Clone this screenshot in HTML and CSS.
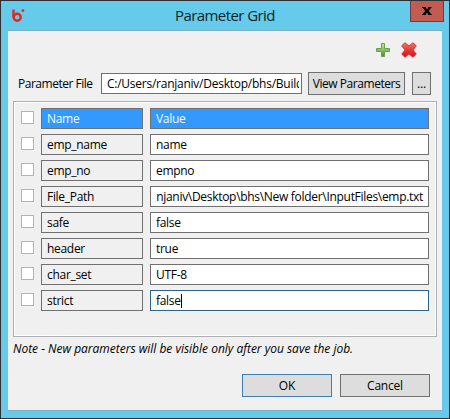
FILE: index.html
```
<!DOCTYPE html>
<html lang="en">
<head>
<meta charset="utf-8">
<title>Parameter Grid</title>
<link rel="stylesheet" href="styles.css">
</head>
<body>
<div class="window">
  <header class="titlebar">
    <svg class="logo" width="14" height="14" viewBox="0 0 14 14"><path d="M1.500 0.500V8.200" fill="none" stroke="#e5261f" stroke-width="2.400"/><circle cx="5.200" cy="8.300" r="3.500" fill="none" stroke="#e5261f" stroke-width="2.400"/><circle cx="10.900" cy="1.600" r="1.350" fill="#e5261f"/></svg>
    <h1 class="title">Parameter Grid</h1>
    <button class="close" aria-label="Close"><svg width="10" height="8" viewBox="0 0 10 8"><path d="M0 0h4v1L5 2.300 6 1V0h3.500v1H9L6.700 4 9.200 7h.5v1H6V7L5 5.700 4 7v1H0V7h.8L3.300 4 1 1H0z" fill="#000"/></svg></button>
  </header>
  <main class="client">
    <div class="tools">
      <svg width="16" height="16" viewBox="0 0 16 16"><defs><linearGradient id="g" x1="0" y1="0" x2="0" y2="1"><stop offset="0" stop-color="#cfe493"/><stop offset=".5" stop-color="#86c05c"/><stop offset="1" stop-color="#4a8545"/></linearGradient></defs><path d="M6.500 1.500h3v5h5v3h-5v5h-3v-5h-5v-3h5z" fill="url(#g)" stroke="#68a24d" stroke-width="1" stroke-linejoin="round"/></svg>
      <svg width="16" height="16" viewBox="0 0 16 16"><defs><linearGradient id="r" x1="0" y1="0" x2="0" y2="1"><stop offset="0" stop-color="#f47862"/><stop offset=".5" stop-color="#e83a32"/><stop offset="1" stop-color="#dc0b1c"/></linearGradient></defs><path d="M4 .7 8 4 12 .7 15.300 3.800 12 8l3.300 4.100L12 15.300 8 12 4 15.300.7 12.100 4 8 .7 3.800z" fill="url(#r)" stroke="#d82c28" stroke-width=".9" stroke-linejoin="round"/></svg>
    </div>
    <div class="file-row">
      <label class="file-label">Parameter File</label>
      <div class="field file-field"><div class="path">C:/Users/ranjaniv/Desktop/bhs/Build</div></div>
      <button class="btn view">View Parameters</button>
      <button class="btn browse">...</button>
    </div>
    <section class="group">
      <div class="row head"><i class="check"></i><div class="field name">Name</div><div class="field value">Value</div></div>
      <div class="row"><i class="check"></i><div class="field name">emp_name</div><div class="field value">name</div></div>
      <div class="row"><i class="check"></i><div class="field name">emp_no</div><div class="field value">empno</div></div>
      <div class="row"><i class="check"></i><div class="field name">File_Path</div><div class="field value scrolled"><span>njaniv\Desktop\bhs\New folder\InputFiles\emp.txt</span></div></div>
      <div class="row"><i class="check"></i><div class="field name">safe</div><div class="field value">false</div></div>
      <div class="row"><i class="check"></i><div class="field name">header</div><div class="field value">true</div></div>
      <div class="row"><i class="check"></i><div class="field name">char_set</div><div class="field value">UTF-8</div></div>
      <div class="row"><i class="check"></i><div class="field name">strict</div><div class="field value focused">false<i class="caret"></i></div></div>
    </section>
    <p class="note">Note - New parameters will be visible only after you save the job.</p>
    <footer class="actions">
      <button class="btn primary">OK</button>
      <button class="btn">Cancel</button>
    </footer>
  </main>
</div>
</body>
</html>
```

FILE: styles.css
```
* { box-sizing: border-box; }
body {
  margin: 0;
  font: 12px/16px "Open Sans", "Noto Sans", sans-serif;
  letter-spacing: -0.3px;
  color: #000;
}
.window {
  width: 450px;
  height: 419px;
  padding: 0 7px 7px;
  border: 1px solid #2d2f33;
  background: #66caea;
  overflow: hidden;
}
.titlebar {
  display: flex;
  height: 29px;
  margin-right: -2px;
}
.logo { margin: 8px 0 0 4px; flex: none; }
.title {
  width: 100px;
  margin: 4px 0 0 149px;
  font-size: 15px;
  line-height: 21px;
  font-weight: 400;
  letter-spacing: -0.58px;
  white-space: nowrap;
  color: #10242b;
}
.close {
  display: flex;
  align-items: center;
  justify-content: center;
  width: 34px;
  height: 21px;
  margin-left: auto;
  padding: 0;
  border: 1px solid #703b3b;
  border-top: 0;
  background: #c45b53;
}
.client {
  height: 381px;
  padding: 0 5px;
  border-top: 1px solid #83aec0;
  border-bottom: 1px solid #83aec0;
  background: #f0f0f0;
}
.tools {
  display: flex;
  justify-content: flex-end;
  gap: 10px;
  height: 41px;
  padding: 11px 20px 0 0;
}
.file-row {
  display: flex;
  align-items: center;
  height: 23px;
  padding-left: 5px;
}
.file-label { width: 83px; letter-spacing: -0.48px; white-space: nowrap; }
.field {
  height: 21px;
  padding: 2px 5px;
  border: 1px solid #707070;
  white-space: nowrap;
  overflow: hidden;
  background: #fff;
}
.file-field { width: 201px; margin-right: 6px; padding-right: 2px; letter-spacing: -0.25px; }
.path { overflow: hidden; }
.btn {
  width: 90px;
  height: 23px;
  padding: 0;
  border: 1px solid #707070;
  background: #ddd;
  font: inherit;
  letter-spacing: -0.2px;
  color: #000;
  white-space: nowrap;
}
.btn.view { width: 97px; margin-right: 7px; letter-spacing: -0.45px; }
.btn.browse { width: 19px; }
.btn.primary { border-color: #3c7fb1; }
.group {
  display: flex;
  flex-direction: column;
  gap: 5px;
  width: 424px;
  height: 236px;
  margin-top: 6px;
  padding: 6px 6px 0;
  border: 1px solid #adb0b3;
  box-shadow: inset 0 0 0 1px #fff;
}
.row { display: flex; align-items: center; height: 21px; padding-left: 1px; }
.check {
  width: 13px;
  height: 13px;
  margin: 0 7px 2px 0;
  border: 1px solid #b2b5b8;
  background: #fff;
}
.name { width: 102px; margin-right: 7px; background: #f0f0f0; }
.value { width: 279px; }
.head .field { background: #39f; color: #f4f9ff; }
.scrolled { display: flex; justify-content: flex-end; }
.focused { border-color: #2c628b; }
.caret {
  display: inline-block;
  width: 1px;
  height: 14px;
  background: #000;
  vertical-align: -3px;
}
.note {
  margin: 4px 0 0;
  font-style: italic;
  letter-spacing: -0.01px;
  white-space: nowrap;
}
.actions {
  display: flex;
  justify-content: flex-end;
  gap: 8px;
  margin-top: 17px;
  padding-right: 7px;
}
```
